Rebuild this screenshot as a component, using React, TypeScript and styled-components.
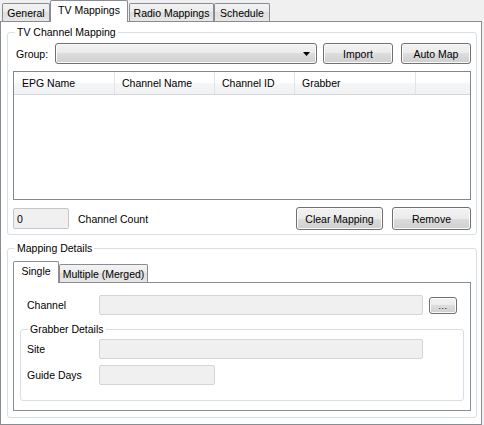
import React from "react";
import styled, { createGlobalStyle, css } from "styled-components";

const Global = createGlobalStyle`
  html, body { margin: 0; padding: 0; }
  body {
    background: #f0f0f0;
    font-family: "Liberation Sans", Arial, sans-serif;
    font-size: 10.5px;
    color: #000;
  }
`;

const Window = styled.div`
  width: 484px;
  height: 425px;
  background: #f0f0f0;
  display: flex;
  flex-direction: column;
`;

const TabStrip = styled.div<{ $pl: number }>`
  display: flex;
  align-items: flex-end;
  height: 21px;
  padding-left: ${(p) => p.$pl}px;
  box-sizing: border-box;
  flex: none;
`;

const Tab = styled.div<{ $active?: boolean; $w: number; $ml?: number }>`
  box-sizing: border-box;
  width: ${(p) => p.$w}px;
  margin-left: ${(p) => p.$ml ?? 0}px;
  display: flex;
  align-items: center;
  justify-content: center;
  border: 1px solid #898c95;
  border-bottom: none;
  border-radius: 2px 2px 0 0;
  white-space: nowrap;
  flex: none;
  ${(p) =>
    p.$active
      ? css`
          height: 22px;
          margin-bottom: -1px;
          padding-bottom: 3px;
          background: #fff;
          position: relative;
          z-index: 1;
        `
      : css`
          height: 18px;
          background: linear-gradient(#f3f3f3 0%, #ebebeb 50%, #dfdfdf 50%, #e6e6e6 100%);
        `}
`;

const TabPanel = styled.div<{ $w: number; $h: number; $pad: string }>`
  box-sizing: border-box;
  width: ${(p) => p.$w}px;
  height: ${(p) => p.$h}px;
  border: 1px solid #898c95;
  background: #fff;
  padding: ${(p) => p.$pad};
  display: flex;
  flex-direction: column;
  align-items: flex-start;
  flex: none;
`;

const GroupBox = styled.fieldset<{ $w: number; $mt: number; $pad: string }>`
  box-sizing: border-box;
  width: ${(p) => p.$w}px;
  min-width: 0;
  margin: ${(p) => p.$mt}px 0 0 0;
  padding: ${(p) => p.$pad};
  border: 1px solid #d5dfe5;
  border-radius: 3px;
  display: flex;
  flex-direction: column;
  flex: none;
`;

const Legend = styled.legend<{ $ml: number }>`
  padding: 0 2px;
  margin-left: ${(p) => p.$ml}px;
  line-height: 13px;
  height: 13px;
`;

const Row = styled.div<{ $h: number; $mt?: number }>`
  display: flex;
  align-items: center;
  height: ${(p) => p.$h}px;
  margin-top: ${(p) => p.$mt ?? 0}px;
  flex: none;
`;

const Label = styled.div<{ $w?: number; $pl?: number; $ml?: number }>`
  box-sizing: border-box;
  ${(p) => (p.$w ? `width: ${p.$w}px;` : "")}
  padding-left: ${(p) => p.$pl ?? 0}px;
  margin-left: ${(p) => p.$ml ?? 0}px;
  white-space: nowrap;
  flex: none;
`;

const Spacer = styled.div`
  flex: 1;
`;

const Button = styled.button<{ $w: number; $h: number; $mr?: number; $ml?: number }>`
  box-sizing: border-box;
  width: ${(p) => p.$w}px;
  height: ${(p) => p.$h}px;
  margin: 0 ${(p) => p.$mr ?? 0}px 0 ${(p) => p.$ml ?? 0}px;
  padding: 0;
  font: inherit;
  color: #000;
  border: 1px solid #707070;
  border-radius: 3px;
  background: linear-gradient(#f2f2f2 0%, #ebebeb 50%, #dddddd 50%, #cfcfcf 100%);
  box-shadow: inset 0 0 0 1px #fbfbfb;
  flex: none;
  display: flex;
  align-items: center;
  justify-content: center;
`;

const DotsButton = styled(Button)`
  align-items: flex-end;
  padding-bottom: 2px;
  font-size: 9px;
  letter-spacing: 0.5px;
`;

const Combo = styled.div<{ $w: number }>`
  box-sizing: border-box;
  width: ${(p) => p.$w}px;
  height: 21px;
  border: 1px solid #707070;
  border-radius: 3px;
  background: linear-gradient(#f2f2f2 0%, #ebebeb 50%, #dddddd 50%, #cfcfcf 100%);
  box-shadow: inset 0 0 0 1px #fbfbfb;
  display: flex;
  align-items: center;
  justify-content: flex-end;
  padding-right: 6px;
  flex: none;
`;

const TextBox = styled.div<{ $w: number; $h: number }>`
  box-sizing: border-box;
  width: ${(p) => p.$w}px;
  height: ${(p) => p.$h}px;
  border: 1px solid #d3d5d8;
  border-radius: 2px;
  background: #f0f0f0;
  padding-left: 3px;
  display: flex;
  align-items: center;
  flex: none;
`;

const CountBox = styled(TextBox)`
  border-color: #c4c6c9;
`;

const ListView = styled.div`
  box-sizing: border-box;
  width: 458px;
  height: 129px;
  margin-top: 7px;
  border: 1px solid #828790;
  background: #fff;
  flex: none;
`;

const Header = styled.div`
  display: flex;
  height: 23px;
  box-sizing: border-box;
  padding-left: 1px;
  border-bottom: 1px solid #d5d5d5;
  background: linear-gradient(#ffffff 0%, #ffffff 45%, #f4f5f7 55%, #f1f2f4 100%);
`;

const HeaderCell = styled.div<{ $w?: number }>`
  box-sizing: border-box;
  ${(p) => (p.$w ? `width: ${p.$w}px; border-right: 1px solid #e3e4e6;` : "flex: 1;")}
  padding-left: 7px;
  display: flex;
  align-items: center;
  white-space: nowrap;
`;

const Arrow = () => (
  <svg width="7" height="4" viewBox="0 0 7 4">
    <path d="M0 0H7L3.5 4Z" fill="#000" />
  </svg>
);

export default function App() {
  return (
    <>
      <Global />
      <Window>
        <TabStrip $pl={2}>
          <Tab $w={48}>General</Tab>
          <Tab $w={78} $active>
            TV Mappings
          </Tab>
          <Tab $w={85} $ml={1}>
            Radio Mappings
          </Tab>
          <Tab $w={56}>Schedule</Tab>
        </TabStrip>
        <TabPanel $w={482} $h={404} $pad="4px 0 0 6px">
          <GroupBox $w={470} $mt={0} $pad="4px 5px 4px 5px">
            <Legend $ml={2}>TV Channel Mapping</Legend>
            <Row $h={21}>
              <Label $w={42} $pl={3}>
                Group:
              </Label>
              <Combo $w={262}>
                <Arrow />
              </Combo>
              <Button $w={70} $h={21} $ml={6}>
                Import
              </Button>
              <Button $w={70} $h={21} $ml={8}>
                Auto Map
              </Button>
            </Row>
            <ListView>
              <Header>
                <HeaderCell $w={100}>EPG Name</HeaderCell>
                <HeaderCell $w={100}>Channel Name</HeaderCell>
                <HeaderCell $w={80}>Channel ID</HeaderCell>
                <HeaderCell $w={121}>Grabber</HeaderCell>
                <HeaderCell />
              </Header>
            </ListView>
            <Row $h={23} $mt={7}>
              <CountBox $w={56} $h={21}>
                0
              </CountBox>
              <Label $ml={9}>Channel Count</Label>
              <Spacer />
              <Button $w={87} $h={23} $mr={9}>
                Clear Mapping
              </Button>
              <Button $w={79} $h={23}>
                Remove
              </Button>
            </Row>
          </GroupBox>
          <GroupBox $w={470} $mt={7} $pad="6px 5px 6px 5px">
            <Legend $ml={2}>Mapping Details</Legend>
            <TabStrip $pl={0}>
              <Tab $w={46} $active>
                Single
              </Tab>
              <Tab $w={89} $ml={0}>
                Multiple (Merged)
              </Tab>
            </TabStrip>
            <TabPanel $w={458} $h={129} $pad="12px 0 0 6px">
              <Row $h={20}>
                <Label $w={79} $pl={7}>
                  Channel
                </Label>
                <TextBox $w={324} $h={20} />
                <DotsButton $w={28} $h={17} $ml={6}>
                  ...
                </DotsButton>
              </Row>
              <GroupBox $w={444} $mt={8} $pad="3px 6px 15px 6px">
                <Legend $ml={1}>Grabber Details</Legend>
                <Row $h={20}>
                  <Label $w={72}>Site</Label>
                  <TextBox $w={324} $h={20} />
                </Row>
                <Row $h={20} $mt={6}>
                  <Label $w={72}>Guide Days</Label>
                  <TextBox $w={116} $h={20} />
                </Row>
              </GroupBox>
            </TabPanel>
          </GroupBox>
        </TabPanel>
      </Window>
    </>
  );
}
